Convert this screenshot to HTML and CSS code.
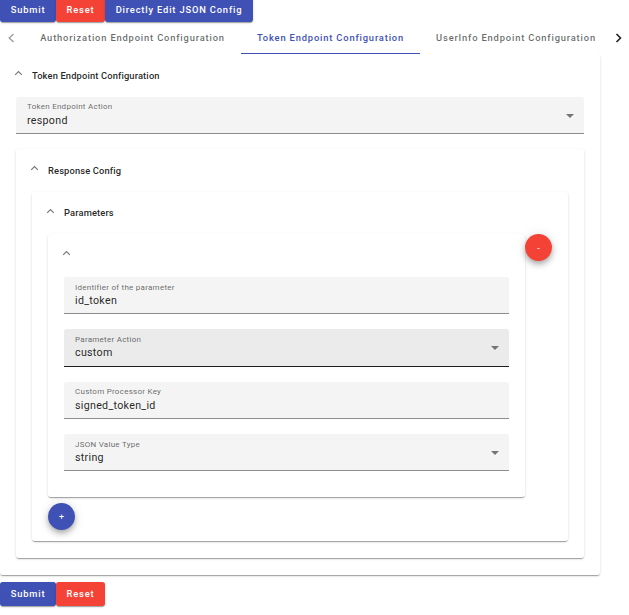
FILE: index.html
```html
<!DOCTYPE html>
<html lang="en">
<head>
<meta charset="utf-8">
<title>Endpoint Configuration</title>
<link rel="stylesheet" href="styles.css">
</head>
<body>
<div class="actions actions-top">
  <button class="btn submit">Submit</button><button class="btn reset">Reset</button><button class="btn edit">Directly Edit JSON Config</button>
</div>
<nav class="tabs">
  <svg class="pager prev" viewBox="0 0 8 10"><path d="M6.5 1 2.2 5l4.3 4"/></svg>
  <a class="tab tab-auth"><span>Authorization Endpoint Configuration</span></a>
  <a class="tab tab-token active"><span>Token Endpoint Configuration</span></a>
  <a class="tab tab-user"><span>UserInfo Endpoint Configuration</span></a>
  <svg class="pager next" viewBox="0 0 8 10"><path d="M1.5 1l4 4-4 4"/></svg>
</nav>
<main class="card outer">
  <header class="head"><svg class="chev" viewBox="0 0 8 6"><path d="M1.2 4.9 4.5 1.6l3.3 3.3"/></svg><h2>Token Endpoint Configuration</h2></header>
  <div class="field"><label>Token Endpoint Action</label><div class="value">respond</div><i class="arrow"></i></div>
  <section class="card response">
    <header class="head"><svg class="chev" viewBox="0 0 8 6"><path d="M1.2 4.9 4.5 1.6l3.3 3.3"/></svg><h2>Response Config</h2></header>
    <section class="card params">
      <header class="head"><svg class="chev" viewBox="0 0 8 6"><path d="M1.2 4.9 4.5 1.6l3.3 3.3"/></svg><h2>Parameters</h2></header>
      <div class="row">
        <section class="card item">
          <header class="head"><svg class="chev" viewBox="0 0 8 6"><path d="M1.2 4.9 4.5 1.6l3.3 3.3"/></svg></header>
          <div class="field low"><label>Identifier of the parameter</label><div class="value">id_token</div></div>
          <div class="field low hovered"><label>Parameter Action</label><div class="value">custom</div><i class="arrow"></i></div>
          <div class="field"><label>Custom Processor Key</label><div class="value">signed_token_id</div></div>
          <div class="field low"><label>JSON Value Type</label><div class="value">string</div><i class="arrow"></i></div>
        </section>
        <button class="fab remove">-</button>
      </div>
      <button class="fab add">+</button>
    </section>
  </section>
</main>
<div class="actions actions-bottom">
  <button class="btn submit">Submit</button><button class="btn reset">Reset</button>
</div>
</body>
</html>
```
FILE: styles.css
```css
* { box-sizing: border-box; }
html { overflow: hidden; }
body { margin: 0; width: 629px; height: 615px; overflow: hidden; background: #fff; color: rgba(0,0,0,.87); font-family: Roboto, sans-serif; }
button { border: 0; padding: 0; font-family: inherit; color: #fff; }
.actions { display: flex; height: 24px; position: relative; z-index: 2; }
.actions-top { margin-top: -2px; }
.btn { height: 24px; padding-bottom: 2px; border-radius: 2.67px; font-size: 9.333px; font-weight: 500; letter-spacing: .833px; box-shadow: 0 2px 1px -1px rgba(0,0,0,.2), 0 1px 1px rgba(0,0,0,.14), 0 1px 3px rgba(0,0,0,.12); }
.submit { width: 56px; background: #3f51b5; }
.reset { width: 49px; background: #f44336; }
.edit { width: 148px; background: #3f51b5; }
.tabs { display: flex; align-items: center; height: 32px; position: relative; z-index: 1; background: #fff; }
.pager { width: 8px; height: 10px; fill: none; stroke: #999; stroke-width: 1.3; }
.prev { margin-left: 7px; }
.next { margin-left: 3px; stroke: #222; stroke-width: 1.6; }
.tab { height: 32px; flex: none; display: flex; justify-content: center; align-items: center; padding-bottom: 1px; font-size: 9.333px; font-weight: 500; letter-spacing: .833px; color: rgba(0,0,0,.6); white-space: nowrap; }
.tab-auth { width: 217px; margin-left: 9px; }
.tab-token { width: 179px; }
.tab-user { width: 192px; }
.tab.active { color: #3f51b5; border-bottom: 1px solid #3f51b5; padding-bottom: 0; }
.card { border-radius: 2.67px; background: #fff; padding: 0 16px; box-shadow: 0 2px 1px -1px rgba(0,0,0,.2), 0 1px 1px rgba(0,0,0,.14), 0 1px 3px rgba(0,0,0,.12); }
.outer { width: 600px; height: 521px; }
.head { height: 43px; display: flex; align-items: center; }
.chev { width: 8px; height: 6px; margin: -5px 10px 0 -2px; fill: none; stroke: #777; stroke-width: 1.15; }
h2 { margin: 0; font-size: 9.333px; line-height: 14px; font-weight: 500; letter-spacing: .14px; }
.field { position: relative; height: 37px; padding: 4px 11px 0; background: #f4f4f4; border-bottom: 1px solid #8c8c8c; border-radius: 2.67px 2.67px 0 0; }
label { display: block; height: 13px; line-height: 12px; font-size: 8px; letter-spacing: .26px; color: rgba(0,0,0,.6); }
.low label { height: 12px; }
.low { padding-top: 5px; }
.value { height: 14px; line-height: 14px; font-size: 10.667px; letter-spacing: .3px; }
.arrow { position: absolute; right: 10px; top: 17px; border: 4px solid transparent; border-top-color: #757575; border-bottom: 0; }
.hovered { height: 38px; background: #ebebeb; border-color: #1e1e1e; }
.response { height: 409px; margin-top: 15px; }
.params { height: 349px; }
.params > .head { height: 42px; }
.item > .head { height: 43px; }
.row { display: flex; }
.item { width: 477px; height: 263px; }
.item .field + .field { margin-top: 15px; }
.fab { width: 27px; height: 27px; border-radius: 50%; font-size: 8.9px; font-weight: 400; box-shadow: 0 3px 5px -1px rgba(0,0,0,.2), 0 4px 7px rgba(0,0,0,.14), 0 1px 12px rgba(0,0,0,.12); }
.remove { background: #f44336; }
.add { display: block; background: #3f51b5; margin-top: 6px; }
.actions-bottom { margin-top: 7px; }
```
